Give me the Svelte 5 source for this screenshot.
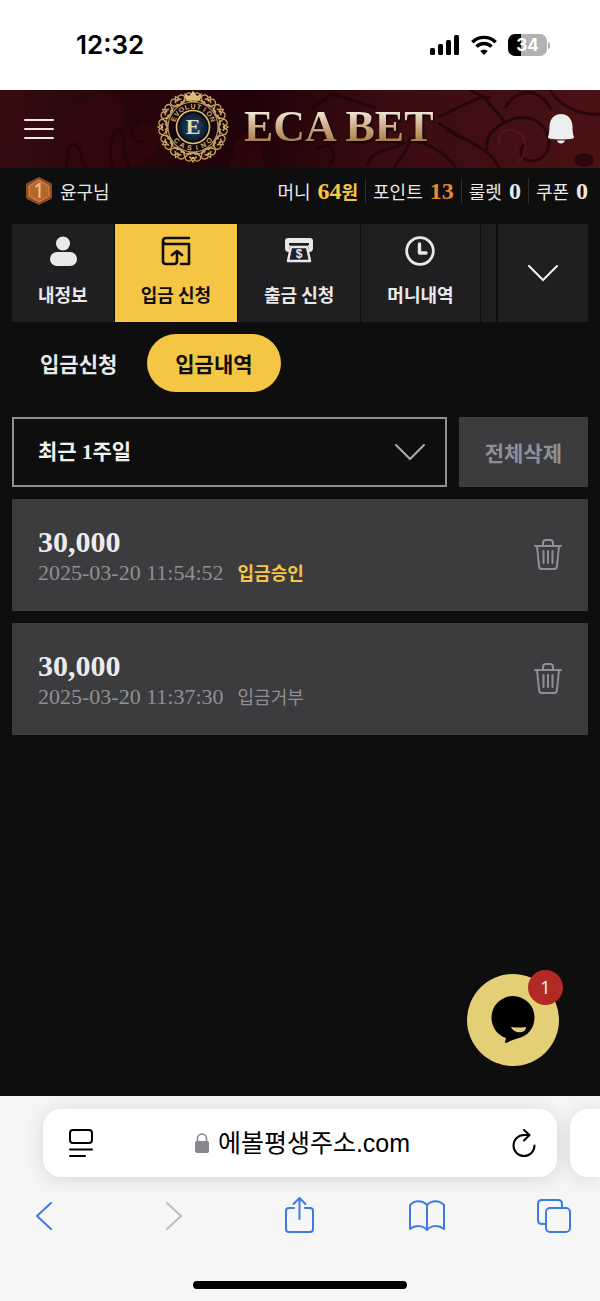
<script lang="ts">
	type Deposit = {
		amount: string;
		date: string;
		status: string;
		approved: boolean;
	};

	const balances = [
		{ label: '머니', value: '64', unit: '원', tone: 'gold' },
		{ label: '포인트', value: '13', unit: '', tone: 'orange' },
		{ label: '룰렛', value: '0', unit: '', tone: 'plain' },
		{ label: '쿠폰', value: '0', unit: '', tone: 'plain' }
	];

	const tabs = [
		{ id: 'profile', label: '내정보' },
		{ id: 'deposit', label: '입금 신청' },
		{ id: 'withdraw', label: '출금 신청' },
		{ id: 'history', label: '머니내역' }
	];

	const deposits: Deposit[] = [
		{ amount: '30,000', date: '2025-03-20 11:54:52', status: '입금승인', approved: true },
		{ amount: '30,000', date: '2025-03-20 11:37:30', status: '입금거부', approved: false }
	];

	const petals = Array.from({ length: 12 }, (_, i) => i * 30);
	const sealTop = [...'EVOLUTION'].map((letter, i) => ({ letter, angle: (i - 4) * 17 }));
	const sealBottom = [...'CASINO'].map((letter, i) => ({ letter, angle: (2.5 - i) * 20 }));

	let activeTab = $state('deposit');
	let activeView = $state('입금내역');
	let period = $state('week');
</script>

<div class="screen">
	<div class="status">
		<span class="status__time">12:32</span>
		<div class="status__icons">
			<svg viewBox="0 0 30 20" width="30" height="20" aria-hidden="true">
				<rect x="0" y="13" width="5" height="7" rx="1.5" />
				<rect x="8" y="9" width="5" height="11" rx="1.5" />
				<rect x="16" y="5" width="5" height="15" rx="1.5" />
				<rect x="24" y="0" width="5" height="20" rx="1.5" />
			</svg>
			<svg viewBox="0 0 26 20" width="26" height="20" aria-hidden="true">
				<g fill="none" stroke="#000" stroke-width="3.4">
					<path d="M1.3 7.2a16.6 16.6 0 0 1 23.4 0" />
					<path d="M5.5 11.6a10.7 10.7 0 0 1 15 0" />
				</g>
				<path d="M13 20 9.2 16a5.4 5.4 0 0 1 7.6 0Z" />
			</svg>
			<div class="battery"><span>34</span></div>
		</div>
	</div>

	<header class="header">
		<svg class="header__pattern" viewBox="0 0 600 78" preserveAspectRatio="xMidYMid slice" aria-hidden="true">
			<defs>
				<linearGradient id="wine">
					<stop offset="0" stop-color="#350d10" />
					<stop offset=".15" stop-color="#29070b" />
					<stop offset=".42" stop-color="#1f0309" />
					<stop offset=".65" stop-color="#3a0c10" />
					<stop offset="1" stop-color="#4a1215" />
				</linearGradient>
			</defs>
			<rect width="600" height="78" fill="url(#wine)" />
			<g fill="#3c080c" opacity=".45">
				<path d="M62 45C70 15 95 0 112 5c18 8 14 28 5 42 18-16 40-14 45-1-2 16-18 28-30 32H75C60 68 56 57 62 45Z" />
				<path d="M0 0h30c8 16 2 36-12 48L0 58Z" />
				<path d="M230 78c0-22 10-34 24-38 10 12 4 26 14 38Z" />
			</g>
			<g fill="none" stroke="#1c0408" stroke-width="3" opacity=".7">
				<path d="M66 78c4-12-2-22 9-24 8 4 4 16 12 24M112 78c-4-18 0-38 8-40 8 8-2 24 10 40M140 30c-12 8-10 24 4 22M208 78c6-18 18-24 26-12M316 60c14-10 22 0 14 14" />
				<path d="M438 27 483 6l22 26c-14 9-20 14-18 30l-49-29M505 33c12-8 30-8 40 6 10 20-2 32-14 32-14-2-12-14-4-18M405 52c-12 10-32 4-38 24M410 48c-2 14-10 20-16 30M412 48c18 8 34 14 44 30M445 40c28 12 48 22 54 38M312 18l20-14 44 14M470 0c10 6 16 8 20 8M505 18c12-22 36-20 46 2M550 0c8 14 28 26 50 24" />
			</g>
			<path d="M500 55c-5-13 9-19 18-13 12 8 8 24 0 30" fill="none" stroke="#551519" stroke-width="2" />
			<ellipse cx="584" cy="70" rx="10" ry="7" fill="#2b070b" />
		</svg>

		<button class="header__button" type="button" aria-label="메뉴">
			<svg viewBox="0 0 30 24" width="30" height="24" aria-hidden="true">
				<path d="M1 3h28M1 12h28M1 21h28" stroke="#f2e6e8" stroke-width="2" stroke-linecap="round" />
			</svg>
		</button>

		<a class="logo" href="/">
			<svg viewBox="-37 -37 74 74" width="74" height="74" aria-hidden="true">
				<defs>
					<radialGradient id="sapphire">
						<stop offset="0" stop-color="#21507b" />
						<stop offset="1" stop-color="#0b1b30" />
					</radialGradient>
				</defs>
				<g fill="none" stroke="#c3a35f" stroke-width="1.3">
					{#each petals as angle}
						<g transform="rotate({angle})">
							<path d="M0-26c-8-1-10-6-5-8 4-1 5 4 1 4M0-26c8-1 10-6 5-8-4-1-5 4-1 4M-3-30l3-5 3 5M-7-27q7 3 14 0M-3-28l3 3 3-3" />
							<circle cy="-31" r="1.2" fill="#d9bd78" stroke="none" />
						</g>
					{/each}
				</g>
				<circle r="25" fill="#160609" stroke="#b3935a" stroke-width="1.2" />
				<circle r="16.5" fill="#120609" stroke="#d9bd78" stroke-width="1.6" />
				<circle r="14" fill="url(#sapphire)" />
				<path d="M-7-27-9-34l5 3 4-5 4 5 5-3-2 7Z" fill="#d9bd78" />
				<g class="seal-text" text-anchor="middle">
					{#each sealTop as item}
						<text y="-18.500" transform="rotate({item.angle})">{item.letter}</text>
					{/each}
					{#each sealBottom as item}
						<text y="23.500" transform="rotate({item.angle})">{item.letter}</text>
					{/each}
				</g>
				<text class="seal-letter" y="7" text-anchor="middle">E</text>
			</svg>
			<span class="logo__name">ECA BET</span>
		</a>

		<button class="header__button" type="button" aria-label="알림">
			<svg viewBox="0 0 26 30" width="26" height="30" fill="#ededee" aria-hidden="true">
				<path d="M0 23C1 21 1.500 16 1.500 12 2 4 7 0 13 0s11 4 11.500 12c0 4 .5 9 1.500 11 0 1-1 1.500-2 1.700-7 1-15 1-22 0C1 24.500 0 24 0 23ZM9 26.500h8c-1 4-7 4-8 0Z" />
			</svg>
		</button>
	</header>

	<main class="content">
		<div class="account">
			<svg viewBox="0 0 26 28" width="26" height="28" aria-hidden="true">
				<path d="M13 0 25 6q1 1 1 2v12q0 1-1 2l-12 6L1 22q-1-1-1-2V8q0-1 1-2Z" fill="#8f4b21" />
				<path d="m13 3 10 6v10l-10 6-10-6V9Z" fill="#b5662c" stroke="#d98f50" stroke-width="1" />
				<path d="m9.500 10 4-3v14" fill="none" stroke="#f3bd8a" stroke-width="2" />
			</svg>
			<span>윤구님</span>
			<ul class="balances">
				{#each balances as item}
					<li>
						<span>{item.label}</span>
						<strong class={item.tone}><span class="number">{item.value}</span>{item.unit}</strong>
					</li>
				{/each}
			</ul>
		</div>

		<nav class="tabs">
			<div class="tabs__list">
				{#each tabs as tab}
					<button
						class="tab"
						class:tab--active={activeTab === tab.id}
						type="button"
						onclick={() => (activeTab = tab.id)}
					>
						<svg viewBox="0 0 30 30" width="30" height="30" aria-hidden="true">
							{#if tab.id === 'profile'}
								<circle cx="15" cy="7.500" r="7" fill="currentColor" />
								<rect x="2" y="16" width="27" height="14" rx="7" fill="currentColor" />
							{:else if tab.id === 'deposit'}
								<g fill="none" stroke="currentColor" stroke-width="2.600" stroke-linecap="round" stroke-linejoin="round">
									<path d="M28 2H5C1 2 1 8 5 8h23v20h-8M2 5v20q0 3 3 3h8q3 0 3-3v-9" />
									<path d="m11 19 5-4 5 4" />
								</g>
							{:else if tab.id === 'withdraw'}
								<path d="M4 2h22q3 0 3 3v7q0 4-4 4L24 9H6L5 16q-4 0-4-4V5q0-3 3-3Z" fill="currentColor" />
								<path d="M5 8h20" stroke="#1f1f22" stroke-width="2" />
								<path d="M7 11h16l3 14H4Z" fill="#1f1f22" stroke="currentColor" stroke-width="2.400" stroke-linejoin="round" />
								<text class="dollar" x="15" y="22" text-anchor="middle">$</text>
							{:else}
								<g fill="none" stroke="currentColor" stroke-linecap="round" stroke-linejoin="round">
									<circle cx="15" cy="15" r="13.300" stroke-width="2.800" />
									<path d="M14.500 8v9H21" stroke-width="3.400" />
								</g>
							{/if}
						</svg>
						{tab.label}
					</button>
				{/each}
				<div class="tab tab--rest"></div>
			</div>
			<button class="tabs__more" type="button" aria-label="더보기">
				<svg viewBox="0 0 30 17" width="30" height="17" aria-hidden="true">
					<path d="m1 1 14 14L29 1" fill="none" stroke="#f0f0f2" stroke-width="2" stroke-linecap="round" />
				</svg>
			</button>
		</nav>

		<div class="views">
			{#each ['입금신청', '입금내역'] as view}
				<button
					class="view"
					class:view--active={activeView === view}
					type="button"
					onclick={() => (activeView = view)}
				>
					{view}
				</button>
			{/each}
		</div>

		<div class="filters">
			<div class="period">
				<select aria-label="기간" bind:value={period}>
					<option value="week">최근 1주일</option>
				</select>
				<svg viewBox="0 0 30 17" width="30" height="17" aria-hidden="true">
					<path d="m1 1 14 14L29 1" fill="none" stroke="#aaaab0" stroke-width="2" stroke-linecap="round" />
				</svg>
			</div>
			<button class="clear" type="button">전체삭제</button>
		</div>

		<ul class="deposits">
			{#each deposits as deposit}
				<li class="deposit">
					<div>
						<strong class="deposit__amount">{deposit.amount}</strong>
						<div class="deposit__meta">
							<time>{deposit.date}</time>
							<span class="deposit__status" class:approved={deposit.approved}>{deposit.status}</span>
						</div>
					</div>
					<button type="button" aria-label="삭제">
						<svg viewBox="0 0 28 34" width="28" height="34" aria-hidden="true">
							<g fill="none" stroke="currentColor" stroke-width="2" stroke-linecap="round" stroke-linejoin="round">
								<path d="M1 8h26M9 8V5q0-3 3-3h4q3 0 3 3v3M3 8l2 20q0 3 3 3h12q3 0 3-3l2-20" />
								<path d="M9.500 13v12M14 13v12M18.500 13v12" />
							</g>
						</svg>
					</button>
				</li>
			{/each}
		</ul>

		<button class="chat" type="button" aria-label="채팅">
			<svg viewBox="0 0 44 48" width="44" height="48" aria-hidden="true">
				<path d="M22 0a21.500 21.500 0 0 1 21.500 21.500C43.500 33 36 40 28 42c-4 1-9 3-13 5q-1 0-1-1l1-4C6 39 .5 31 .5 21.500A21.500 21.500 0 0 1 22 0Z" />
				<path d="M20 31q7 1 15 0c0 7-12 7-15 0Z" fill="#e3cf76" />
			</svg>
			<span class="chat__badge">1</span>
		</button>
	</main>

	<footer class="browser">
		<div class="browser__pages">
			<div class="address">
				<button type="button" aria-label="페이지 설정">
					<svg viewBox="0 0 24 28" width="24" height="28" aria-hidden="true">
						<g fill="none" stroke="#000" stroke-width="2" stroke-linecap="round">
							<rect x="1" y="1" width="22" height="13" rx="3" />
							<path d="M1 20.500h22M1 27h15" />
						</g>
					</svg>
				</button>
				<button class="address__url" type="button">
					<svg viewBox="0 0 14 20" width="14" height="20" aria-hidden="true">
						<rect y="8" width="14" height="12" rx="2" fill="#87878c" />
						<path d="M2.500 9V5.500a4.500 4.500 0 0 1 9 0V9" fill="none" stroke="#87878c" stroke-width="1.600" />
					</svg>
					에볼평생주소.com
				</button>
				<button type="button" aria-label="새로고침">
					<svg viewBox="0 0 24 28" width="24" height="28" aria-hidden="true">
						<g fill="none" stroke="#000" stroke-width="2" stroke-linecap="round" stroke-linejoin="round">
							<path d="M17 6H12A10.500 10.500 0 1 0 22.500 16.500" />
							<path d="m12 1 5.500 5L12 11.500" />
						</g>
					</svg>
				</button>
			</div>
			<div class="next-page"></div>
		</div>

		<nav class="toolbar">
			<button type="button" aria-label="뒤로">
				<svg viewBox="0 0 36 40" width="36" height="40"><path d="M25 8 11 21l14 13" /></svg>
			</button>
			<button class="disabled" type="button" aria-label="앞으로" disabled>
				<svg viewBox="0 0 36 40" width="36" height="40"><path d="M13 8l14 13-14 13" /></svg>
			</button>
			<button type="button" aria-label="공유">
				<svg viewBox="0 0 36 40" width="36" height="40">
					<path d="M13 13H8q-3 0-3 3v18q0 3 3 3h21q3 0 3-3V16q0-3-3-3h-5M18.500 24V3M12.500 9l6-6 6 6" />
				</svg>
			</button>
			<button type="button" aria-label="책갈피">
				<svg viewBox="0 0 36 40" width="36" height="40">
					<path d="M18 35c-4-5-12-5-17-1V10c5-5 12-5 17 0 5-5 12-5 17 0v24c-5-4-13-4-17 1V10" />
				</svg>
			</button>
			<button type="button" aria-label="탭">
				<svg viewBox="0 0 36 40" width="36" height="40">
					<rect x="10" y="13" width="24" height="24" rx="4" />
					<path d="M10 29H6q-4 0-4-4V9q0-4 4-4h16q4 0 4 4v4" />
				</svg>
			</button>
		</nav>
		<div class="home-bar"></div>
	</footer>
</div>

<style>
	:global(body) {
		background: #0e0e0e;
	}

	.screen {
		display: flex;
		flex-direction: column;
		min-height: 100vh;
		overflow: hidden;
		background: #0e0e0e;
		color: #e9e9ec;
		font-family: 'Noto Sans CJK KR', sans-serif;
		font-size: 18px;
		line-height: 26px;
	}

	svg {
		display: block;
		flex: none;
	}

	button {
		margin: 0;
		padding: 0;
		border: 0;
		background: none;
		color: inherit;
		font: inherit;
	}

	ul {
		margin: 0;
		padding: 0;
		list-style: none;
	}

	.number,
	.logo,
	.period select,
	.deposit__amount,
	.deposit__meta time {
		font-family: 'Liberation Serif', 'Noto Sans CJK KR', serif;
	}

	.status {
		display: flex;
		align-items: center;
		justify-content: space-between;
		height: 90px;
		padding: 0 53px 0 76px;
		box-sizing: border-box;
		background: #fff;
		color: #000;
		font-family: Inter, sans-serif;
		font-weight: 600;
	}

	.status__time {
		font-size: 26px;
	}

	.status__icons {
		display: flex;
		align-items: center;
		gap: 11px;
	}

	.battery {
		position: relative;
		width: 39px;
		height: 22px;
		border-radius: 7px;
		background: linear-gradient(90deg, #000 34%, #b2b2b4 34%);
		color: #fff;
		font-size: 17px;
		font-weight: 700;
		line-height: 22px;
		text-align: center;
	}

	.battery::after {
		position: absolute;
		top: 8px;
		right: -3px;
		width: 2px;
		height: 7px;
		border-radius: 0 2px 2px 0;
		background: #b2b2b4;
		content: '';
	}

	.header {
		position: relative;
		display: flex;
		align-items: center;
		gap: 102px;
		height: 78px;
		padding: 0 26px 0 24px;
		overflow: hidden;
	}

	.header__pattern {
		position: absolute;
		inset: 0;
		width: 100%;
		height: 100%;
	}

	.header__button,
	.logo {
		position: relative;
	}

	.header__button:last-child {
		margin-left: auto;
	}

	.logo {
		display: flex;
		align-items: center;
		gap: 14px;
		height: 74px;
		padding-bottom: 4px;
		text-decoration: none;
		white-space: nowrap;
	}

	.logo__name {
		background: linear-gradient(#efe4d3 20%, #c6a27a 55%, #ad7b48 80%);
		background-clip: text;
		color: transparent;
		filter: drop-shadow(1px 2px 1px #100307);
		font-size: 44px;
		font-weight: 700;
		line-height: 50px;
	}

	.seal-text {
		fill: #cfb06b;
		font-family: 'Liberation Sans', sans-serif;
		font-size: 7px;
		font-weight: 700;
	}

	.seal-letter {
		fill: #ead9ae;
		font-size: 22px;
		font-weight: 700;
	}

	.content {
		position: relative;
		flex: 1;
		padding: 0 12px;
	}

	.account {
		display: flex;
		align-items: center;
		gap: 8px;
		height: 46px;
		margin-bottom: 10px;
		padding-left: 14px;
		white-space: nowrap;
	}

	.balances {
		display: flex;
		margin-left: auto;
	}

	.balances li {
		display: flex;
		align-items: baseline;
		gap: 7px;
	}

	.balances li + li {
		margin-left: 7px;
		padding-left: 7px;
		border-left: 1px solid #2c2c2e;
	}

	.number {
		font-size: 24px;
	}

	.gold {
		color: #f5c644;
	}

	.orange {
		color: #e58a35;
	}

	.tabs {
		display: flex;
		gap: 2px;
		height: 98px;
	}

	.tabs__list {
		display: flex;
		flex: 1;
		gap: 1px;
		min-width: 0;
		overflow: hidden;
	}

	.tab {
		display: flex;
		flex: none;
		flex-direction: column;
		align-items: center;
		gap: 15px;
		padding: 12px 26px;
		box-sizing: border-box;
		background: #1f1f22;
		font-weight: 700;
		white-space: nowrap;
	}

	.tab--active {
		background: #f5c644;
		color: #0e0e0e;
	}

	.tab--rest {
		flex: 1;
		padding: 0;
	}

	.dollar {
		fill: currentColor;
		font-family: 'Liberation Sans', sans-serif;
		font-size: 12px;
	}

	.tabs__more {
		display: grid;
		width: 90px;
		flex: none;
		place-items: center;
		background: #1f1f22;
	}

	.views {
		display: flex;
		gap: 2px;
		margin: 12px 0 25px;
	}

	.view {
		height: 58px;
		padding: 0 28px;
		border-radius: 29px;
		font-size: 21px;
		font-weight: 700;
	}

	.view--active {
		background: #f5c644;
		color: #0e0e0e;
	}

	.filters {
		display: flex;
		gap: 12px;
		height: 70px;
		font-size: 21px;
		font-weight: 700;
	}

	.period {
		position: relative;
		display: flex;
		flex: 1;
		align-items: center;
	}

	.period select {
		width: 100%;
		height: 100%;
		padding: 0 24px;
		border: 2px solid #8f8f96;
		border-radius: 0;
		appearance: none;
		background: transparent;
		color: #f0f0f2;
		font-size: inherit;
		font-weight: inherit;
	}

	.period svg {
		position: absolute;
		right: 22px;
		pointer-events: none;
	}

	.clear {
		padding: 0 26px;
		background: #3c3c3e;
		color: #8f9097;
	}

	.deposits {
		display: grid;
		gap: 12px;
		margin-top: 12px;
	}

	.deposit {
		display: flex;
		align-items: center;
		justify-content: space-between;
		height: 112px;
		padding: 0 26px;
		background: #3c3c3e;
		color: #8f9097;
	}

	.deposit__amount {
		display: block;
		color: #ececee;
		font-size: 30px;
		line-height: 34px;
	}

	.deposit__meta {
		display: flex;
		align-items: baseline;
		gap: 14px;
	}

	.deposit__meta time {
		font-size: 22px;
	}

	.approved {
		color: #f5c644;
		font-weight: 700;
	}

	.chat {
		position: absolute;
		right: 41px;
		bottom: 30px;
		display: grid;
		width: 92px;
		height: 92px;
		border-radius: 50%;
		place-items: center;
		background: #e3cf76;
	}

	.chat__badge {
		position: absolute;
		top: -4px;
		right: -4px;
		width: 35px;
		height: 35px;
		border-radius: 50%;
		background: #b32a25;
		color: #fff;
		font-family: 'Open Sans', sans-serif;
		font-size: 18px;
		line-height: 34px;
	}

	.browser {
		height: 205px;
		overflow: hidden;
		background: #f6f6f6;
		color: #000;
	}

	.browser__pages {
		display: flex;
		gap: 13px;
		padding: 13px 0 18px 43px;
	}

	.address {
		display: flex;
		flex: 1;
		align-items: center;
		justify-content: space-between;
		height: 68px;
		padding: 0 21px 0 26px;
		border-radius: 18px;
		background: #fff;
		box-shadow: 0 2px 20px rgb(0 0 0 / 13%);
	}

	.address__url {
		display: flex;
		align-items: center;
		gap: 9px;
		font-family: 'Liberation Sans', 'Noto Sans CJK KR', sans-serif;
		font-size: 25px;
		line-height: 36px;
	}

	.next-page {
		width: 30px;
		border-radius: 18px 0 0 18px;
		background: #fff;
		box-shadow: 0 2px 20px rgb(0 0 0 / 13%);
	}

	.toolbar {
		display: flex;
		justify-content: space-between;
		padding: 0 28px 0 26px;
		color: #3d7be2;
	}

	.toolbar svg {
		fill: none;
		stroke: currentColor;
		stroke-width: 2;
		stroke-linecap: round;
		stroke-linejoin: round;
	}

	.disabled {
		color: #bdbdbf;
	}

	.home-bar {
		width: 214px;
		height: 8px;
		margin: 46px auto 0;
		border-radius: 4px;
		background: #000;
	}
</style>
